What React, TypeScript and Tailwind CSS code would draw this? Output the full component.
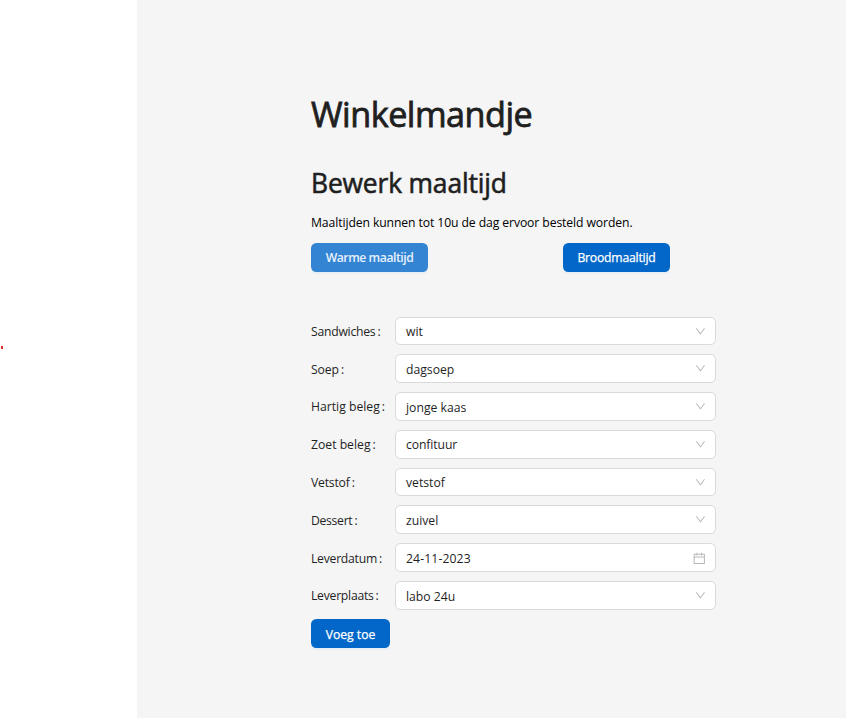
type Field = { label: string; value: string; labelTrack: string; valueTrack: string; icon?: 'calendar' };

const fields: Field[] = [
  { label: 'Sandwiches', value: 'wit', labelTrack: 'tracking-[-0.25px]', valueTrack: 'tracking-[0px]' },
  { label: 'Soep', value: 'dagsoep', labelTrack: 'tracking-[-0.1px]', valueTrack: 'tracking-[0px]' },
  { label: 'Hartig beleg', value: 'jonge kaas', labelTrack: 'tracking-[0px]', valueTrack: 'tracking-[0px]' },
  { label: 'Zoet beleg', value: 'confituur', labelTrack: 'tracking-[0px]', valueTrack: 'tracking-[-0.1px]' },
  { label: 'Vetstof', value: 'vetstof', labelTrack: 'tracking-[-0.2px]', valueTrack: 'tracking-[0px]' },
  { label: 'Dessert', value: 'zuivel', labelTrack: 'tracking-[-0.3px]', valueTrack: 'tracking-[0px]' },
  { label: 'Leverdatum', value: '24-11-2023', labelTrack: 'tracking-[-0.25px]', valueTrack: 'tracking-[0.12px]', icon: 'calendar' },
  { label: 'Leverplaats', value: 'labo 24u', labelTrack: 'tracking-[-0.25px]', valueTrack: 'tracking-[0px]' },
];

function DownIcon() {
  return (
    <svg className="h-[10.8px] w-[10.8px] shrink-0" viewBox="64 64 896 896" fill="#b8b8b8">
      <path d="M884 256h-75c-5.100 0-9.900 2.500-12.900 6.600L512 654.200 227.900 262.600c-3-4.100-7.800-6.600-12.900-6.600h-75c-6.500 0-10.300 7.400-6.500 12.700l352.600 486.100c12.800 17.600 39 17.600 51.700 0l352.600-486.100c3.900-5.300.1-12.700-6.400-12.700z" />
    </svg>
  );
}

function CalendarIcon() {
  return (
    <svg className="mt-px h-[12.6px] w-[12.6px] shrink-0" viewBox="64 64 896 896" fill="#b8b8b8">
      <path d="M880 184H712v-64c0-4.400-3.600-8-8-8h-56c-4.400 0-8 3.600-8 8v64H384v-64c0-4.400-3.600-8-8-8h-56c-4.400 0-8 3.600-8 8v64H144c-17.700 0-32 14.300-32 32v664c0 17.700 14.300 32 32 32h736c17.700 0 32-14.300 32-32V216c0-17.700-14.300-32-32-32zm-40 656H184V460h656v380zM184 392V256h128v48c0 4.400 3.600 8 8 8h56c4.400 0 8-3.600 8-8v-48h256v48c0 4.400 3.600 8 8 8h56c4.400 0 8-3.600 8-8v-48h128v136H184z" />
    </svg>
  );
}

export default function App() {
  return (
    <div className="flex h-[718px] w-[846px] overflow-hidden bg-white font-['Open_Sans',sans-serif] text-[12.2px] text-[#1f1f1f]">
      <aside className="flex w-[137px] shrink-0 items-start pt-[346px]">
        <span className="ml-px h-[3px] w-[2px] bg-[#e52b2b]" />
      </aside>
      <main className="flex-1 bg-[#f5f5f5] pl-[174px]">
        <h1 className="mt-[93px] h-[42px] text-[34.2px] leading-[42px] tracking-[-0.5px] whitespace-nowrap [-webkit-text-stroke:0.8px_#1f1f1f]">Winkelmandje</h1>
        <h2 className="mt-[31px] h-[35px] text-[26.4px] leading-[35px] tracking-[-0.15px] whitespace-nowrap [-webkit-text-stroke:0.6px_#1f1f1f]">Bewerk maaltijd</h2>
        <p className="mt-[12px] h-5 leading-5 tracking-[-0.1px] whitespace-nowrap text-black">Maaltijden kunnen tot 10u de dag ervoor besteld worden.</p>
        <div className="mt-[10px] flex h-[29px] w-[359px] justify-between">
          <button className="w-[117px] rounded-[5.4px] bg-[#3385d3] pt-px font-semibold tracking-[-0.45px] text-[#e6f0fa] shadow-[0_2px_0_rgba(5,145,255,0.06)]">Warme maaltijd</button>
          <button className="w-[107px] rounded-[5.4px] bg-[#0267c8] pt-px tracking-[-0.2px] text-white shadow-[0_2px_0_rgba(5,145,255,0.06)] [-webkit-text-stroke:0.25px_white]">Broodmaaltijd</button>
        </div>
        <form className="mt-[44.5px] flex flex-col gap-[9px]">
          {fields.map((f) => (
            <div key={f.label} className="flex h-[28.8px] items-center">
              <div className="flex w-[84px] pt-[2.200px] whitespace-nowrap">
                <span className={f.labelTrack}>{f.label}</span>
                <span className="ml-[2px]">:</span>
              </div>
              <div className="flex h-[28.8px] w-[321px] items-center justify-between rounded-[5.4px] border border-[#d9d9d9] bg-white pr-[9.500px] pl-[10px]">
                <span className="pt-[2.600px]"><span className={f.valueTrack}>{f.value}</span></span>
                {f.icon ? <CalendarIcon /> : <DownIcon />}
              </div>
            </div>
          ))}
          <button type="button" className="h-[28.8px] w-[79px] rounded-[5.4px] bg-[#0267c8] pt-[3px] text-white shadow-[0_2px_0_rgba(5,145,255,0.06)] [-webkit-text-stroke:0.25px_white]">Voeg toe</button>
        </form>
      </main>
    </div>
  );
}
